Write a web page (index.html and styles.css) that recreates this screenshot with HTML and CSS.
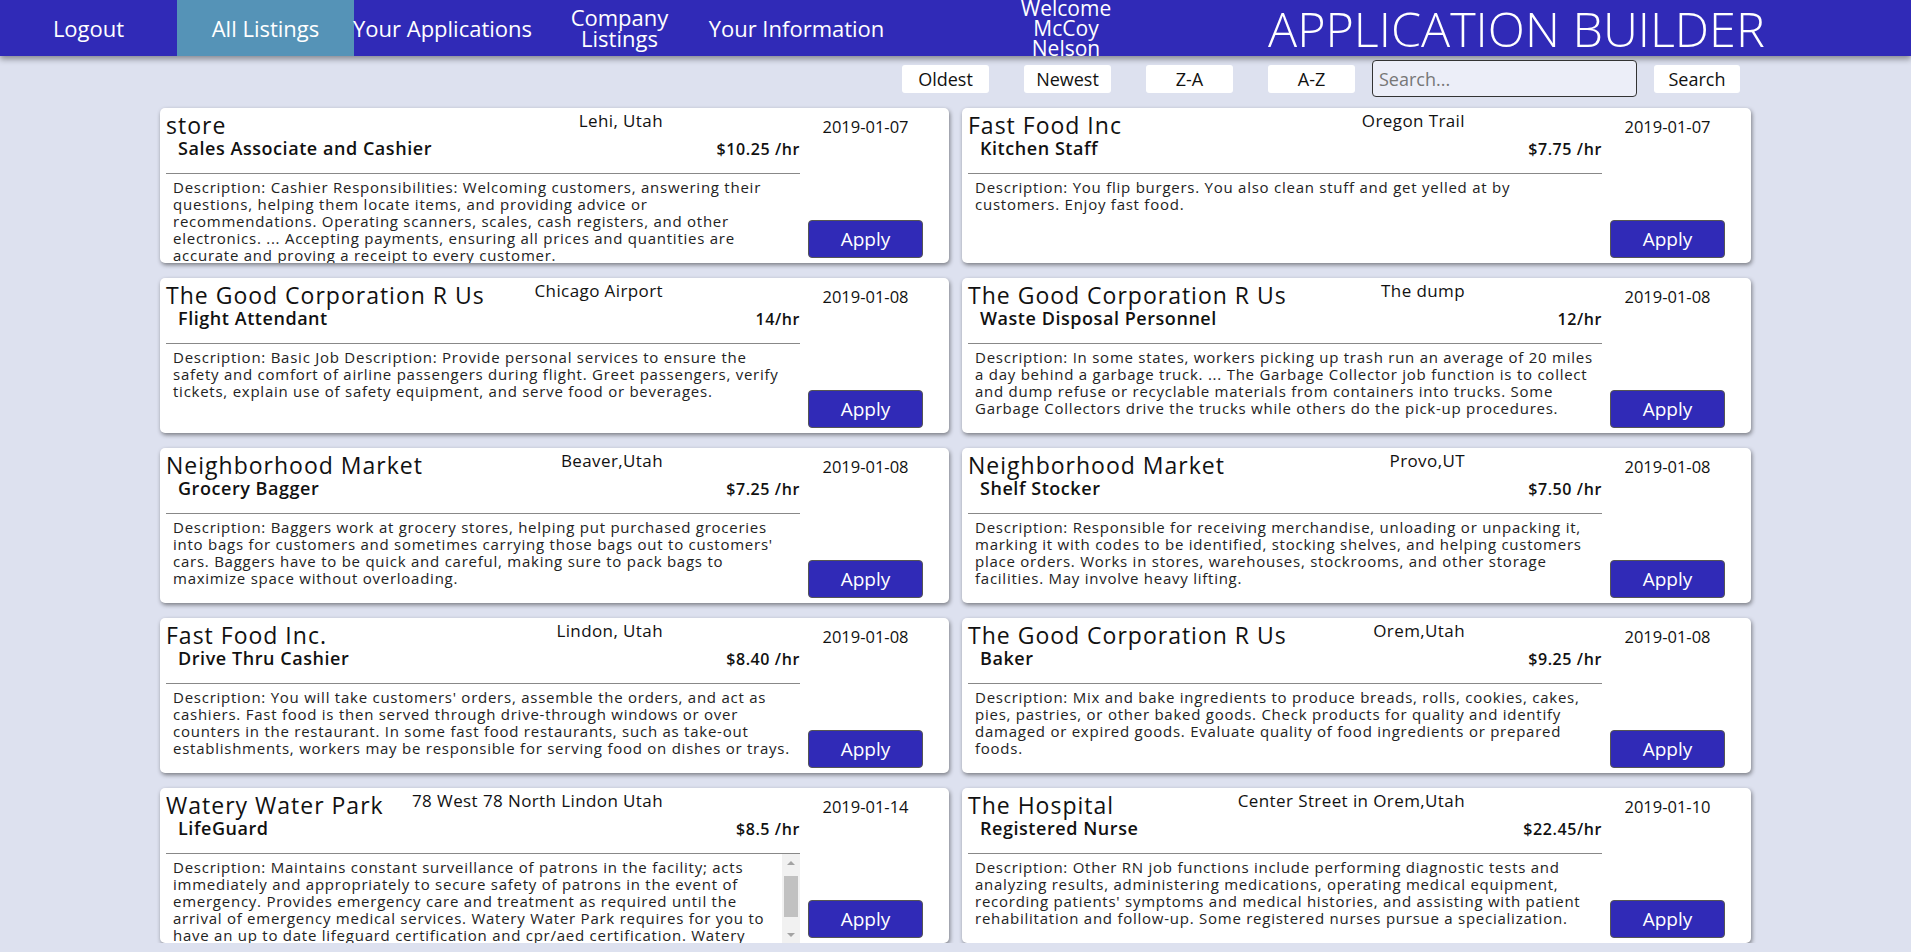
FILE: index.html
```html
<!DOCTYPE html>
<html lang="en">
<head>
<meta charset="utf-8">
<title>Application Builder</title>
<link rel="stylesheet" href="styles.css">
</head>
<body>
<nav class="nav">
  <div class="nav-item">Logout</div>
  <div class="nav-item active">All Listings</div>
  <div class="nav-item nowrap">Your Applications</div>
  <div class="nav-item">Company Listings</div>
  <div class="nav-item">Your Information</div>
  <div class="welcome">Welcome McCoy Nelson</div>
  <div class="title">APPLICATION BUILDER</div>
</nav>

<div class="toolbar">
  <button class="sort-btn first">Oldest</button>
  <button class="sort-btn">Newest</button>
  <button class="sort-btn">Z-A</button>
  <button class="sort-btn">A-Z</button>
  <input class="search" type="text" placeholder="Search...">
  <button class="sort-btn search-btn">Search</button>
</div>

<main class="listings">
  <article class="card">
    <div class="main">
      <div class="head-row"><span class="company">store</span><span class="location">Lehi, Utah</span></div>
      <div class="job-row"><span class="job">Sales Associate and Cashier</span><span class="wage">$10.25 /hr</span></div>
      <div class="divider"></div>
      <div class="desc">Description: Cashier Responsibilities: Welcoming customers, answering their questions, helping them locate items, and providing advice or recommendations. Operating scanners, scales, cash registers, and other electronics. ... Accepting payments, ensuring all prices and quantities are accurate and proving a receipt to every customer.</div>
    </div>
    <div class="side"><span class="date">2019-01-07</span><button class="apply">Apply</button></div>
  </article>

  <article class="card">
    <div class="main">
      <div class="head-row"><span class="company">Fast Food Inc</span><span class="location">Oregon Trail</span></div>
      <div class="job-row"><span class="job">Kitchen Staff</span><span class="wage">$7.75 /hr</span></div>
      <div class="divider"></div>
      <div class="desc">Description: You flip burgers. You also clean stuff and get yelled at by customers. Enjoy fast food.</div>
    </div>
    <div class="side"><span class="date">2019-01-07</span><button class="apply">Apply</button></div>
  </article>

  <article class="card">
    <div class="main">
      <div class="head-row"><span class="company">The Good Corporation R Us</span><span class="location">Chicago Airport</span></div>
      <div class="job-row"><span class="job">Flight Attendant</span><span class="wage">14/hr</span></div>
      <div class="divider"></div>
      <div class="desc">Description: Basic Job Description: Provide personal services to ensure the safety and comfort of airline passengers during flight. Greet passengers, verify tickets, explain use of safety equipment, and serve food or beverages.</div>
    </div>
    <div class="side"><span class="date">2019-01-08</span><button class="apply">Apply</button></div>
  </article>

  <article class="card">
    <div class="main">
      <div class="head-row"><span class="company">The Good Corporation R Us</span><span class="location">The dump</span></div>
      <div class="job-row"><span class="job">Waste Disposal Personnel</span><span class="wage">12/hr</span></div>
      <div class="divider"></div>
      <div class="desc">Description: In some states, workers picking up trash run an average of 20 miles a day behind a garbage truck. ... The Garbage Collector job function is to collect and dump refuse or recyclable materials from containers into trucks. Some Garbage Collectors drive the trucks while others do the pick-up procedures.</div>
    </div>
    <div class="side"><span class="date">2019-01-08</span><button class="apply">Apply</button></div>
  </article>

  <article class="card">
    <div class="main">
      <div class="head-row"><span class="company">Neighborhood Market</span><span class="location">Beaver,Utah</span></div>
      <div class="job-row"><span class="job">Grocery Bagger</span><span class="wage">$7.25 /hr</span></div>
      <div class="divider"></div>
      <div class="desc">Description: Baggers work at grocery stores, helping put purchased groceries into bags for customers and sometimes carrying those bags out to customers' cars. Baggers have to be quick and careful, making sure to pack bags to maximize space without overloading.</div>
    </div>
    <div class="side"><span class="date">2019-01-08</span><button class="apply">Apply</button></div>
  </article>

  <article class="card">
    <div class="main">
      <div class="head-row"><span class="company">Neighborhood Market</span><span class="location">Provo,UT</span></div>
      <div class="job-row"><span class="job">Shelf Stocker</span><span class="wage">$7.50 /hr</span></div>
      <div class="divider"></div>
      <div class="desc">Description: Responsible for receiving merchandise, unloading or unpacking it, marking it with codes to be identified, stocking shelves, and helping customers place orders. Works in stores, warehouses, stockrooms, and other storage facilities. May involve heavy lifting.</div>
    </div>
    <div class="side"><span class="date">2019-01-08</span><button class="apply">Apply</button></div>
  </article>

  <article class="card">
    <div class="main">
      <div class="head-row"><span class="company">Fast Food Inc.</span><span class="location">Lindon, Utah</span></div>
      <div class="job-row"><span class="job">Drive Thru Cashier</span><span class="wage">$8.40 /hr</span></div>
      <div class="divider"></div>
      <div class="desc">Description: You will take customers' orders, assemble the orders, and act as cashiers. Fast food is then served through drive-through windows or over counters in the restaurant. In some fast food restaurants, such as take-out establishments, workers may be responsible for serving food on dishes or trays.</div>
    </div>
    <div class="side"><span class="date">2019-01-08</span><button class="apply">Apply</button></div>
  </article>

  <article class="card">
    <div class="main">
      <div class="head-row"><span class="company">The Good Corporation R Us</span><span class="location">Orem,Utah</span></div>
      <div class="job-row"><span class="job">Baker</span><span class="wage">$9.25 /hr</span></div>
      <div class="divider"></div>
      <div class="desc">Description: Mix and bake ingredients to produce breads, rolls, cookies, cakes, pies, pastries, or other baked goods. Check products for quality and identify damaged or expired goods. Evaluate quality of food ingredients or prepared foods.</div>
    </div>
    <div class="side"><span class="date">2019-01-08</span><button class="apply">Apply</button></div>
  </article>

  <article class="card">
    <div class="main">
      <div class="head-row"><span class="company">Watery Water Park</span><span class="location">78 West 78 North Lindon Utah</span></div>
      <div class="job-row"><span class="job">LifeGuard</span><span class="wage">$8.5 /hr</span></div>
      <div class="divider"></div>
      <div class="desc-wrap">
        <div class="desc">Description: Maintains constant surveillance of patrons in the facility; acts immediately and appropriately to secure safety of patrons in the event of emergency. Provides emergency care and treatment as required until the arrival of emergency medical services. Watery Water Park requires for you to have an up to date lifeguard certification and cpr/aed certification. Watery Water Park will provide training on all park attractions and safety procedures before your first shift.</div>
        <div class="scrollbar" aria-hidden="true">
          <span class="sb-btn"><span class="arrow-up"></span></span>
          <span class="sb-track"><span class="sb-thumb"></span></span>
          <span class="sb-btn"><span class="arrow-down"></span></span>
        </div>
      </div>
    </div>
    <div class="side"><span class="date">2019-01-14</span><button class="apply">Apply</button></div>
  </article>

  <article class="card">
    <div class="main">
      <div class="head-row"><span class="company">The Hospital</span><span class="location">Center Street in Orem,Utah</span></div>
      <div class="job-row"><span class="job">Registered Nurse</span><span class="wage">$22.45/hr</span></div>
      <div class="divider"></div>
      <div class="desc">Description: Other RN job functions include performing diagnostic tests and analyzing results, administering medications, operating medical equipment, recording patients' symptoms and medical histories, and assisting with patient rehabilitation and follow-up. Some registered nurses pursue a specialization.</div>
    </div>
    <div class="side"><span class="date">2019-01-10</span><button class="apply">Apply</button></div>
  </article>
</main>
</body>
</html>
```

FILE: styles.css
```css
* { box-sizing: border-box; }

body {
  margin: 0;
  background: #dde1ef;
  font-family: "Open Sans", "Noto Sans", sans-serif;
  color: #111;
}

.nav {
  height: 56px;
  background: #302ab7;
  color: #fff;
  display: flex;
  align-items: stretch;
  box-shadow: 0 3px 6px rgba(0, 0, 0, 0.4);
}

.nav-item {
  width: 177px;
  display: flex;
  align-items: center;
  justify-content: center;
  text-align: center;
  font-size: 22px;
  line-height: 21px;
}

.nav-item.nowrap { white-space: nowrap; }

.nav-item.active { background: #5593b7; }

.welcome {
  width: 120px;
  margin-left: 121px;
  display: flex;
  align-items: center;
  justify-content: center;
  text-align: center;
  font-size: 21px;
  line-height: 20px;
}

.title {
  margin-left: 142px;
  display: flex;
  align-items: center;
  font-size: 48.5px;
  font-weight: 300;
  white-space: nowrap;
}

.toolbar {
  width: 1591px;
  height: 45px;
  margin: 0 auto;
  padding-right: 11px;
  display: flex;
  justify-content: flex-end;
  align-items: center;
}

.sort-btn {
  width: 87px;
  height: 28px;
  margin-left: 35px;
  padding: 0;
  border: none;
  border-radius: 3px;
  background: #fff;
  color: #111;
  font-family: inherit;
  font-size: 18px;
}

.sort-btn.first { margin-left: 0; }

.search {
  width: 265px;
  height: 37px;
  margin-left: 17px;
  padding: 0 6px;
  border: 1px solid #333;
  border-radius: 4px;
  background: #eceef8;
  font-family: inherit;
  font-size: 18px;
}

.search::placeholder { color: #777; }

.search-btn { width: 86px; margin-left: 17px; }

.listings {
  width: 1591px;
  margin: 7px auto 0;
  display: grid;
  grid-template-columns: 789px 789px;
  column-gap: 13px;
  row-gap: 15px;
}

.card {
  height: 155px;
  background: #fff;
  border-radius: 5px;
  box-shadow: 1px 2px 4px rgba(0, 0, 0, 0.45);
  padding: 0 18px 0 6px;
  display: grid;
  grid-template-columns: 634px 131px;
  overflow: hidden;
}

.main {
  display: flex;
  flex-direction: column;
  min-height: 0;
}

.head-row {
  display: flex;
  justify-content: space-between;
  align-items: flex-start;
  padding-top: 4px;
}

.company {
  font-size: 23px;
  line-height: 26px;
  font-weight: 500;
  letter-spacing: 1px;
  white-space: nowrap;
}

.location {
  font-size: 17px;
  line-height: 20px;
  letter-spacing: 0.4px;
  margin-top: -1px;
  margin-right: 137px;
  white-space: nowrap;
}

.job-row {
  display: flex;
  justify-content: space-between;
  align-items: baseline;
}

.job {
  padding-left: 12px;
  font-size: 18px;
  line-height: 20px;
  font-weight: 600;
  letter-spacing: 0.55px;
}

.wage {
  font-size: 16px;
  font-weight: 600;
  letter-spacing: 0.6px;
}

.divider {
  height: 1px;
  margin-top: 13px;
  background: #888;
}

.desc {
  flex: 1;
  min-height: 0;
  overflow: hidden;
  padding: 5px 6px 0 7px;
  font-size: 15px;
  line-height: 17px;
  letter-spacing: 0.75px;
  color: #222;
}

.desc-wrap {
  flex: 1;
  min-height: 0;
  display: flex;
}

.scrollbar {
  width: 18px;
  display: flex;
  flex-direction: column;
  background: #f1f1f1;
}

.sb-btn {
  height: 17px;
  display: flex;
  align-items: center;
  justify-content: center;
}

.arrow-up {
  width: 0;
  height: 0;
  border-left: 4px solid transparent;
  border-right: 4px solid transparent;
  border-bottom: 4px solid #a3a3a3;
}

.arrow-down {
  width: 0;
  height: 0;
  border-left: 4px solid transparent;
  border-right: 4px solid transparent;
  border-top: 4px solid #a3a3a3;
}

.sb-track {
  flex: 1;
  padding: 5px 2px 0;
}

.sb-thumb {
  display: block;
  height: 41px;
  background: #c1c1c1;
}

.side {
  display: flex;
  flex-direction: column;
  align-items: center;
  justify-content: space-between;
  padding: 9px 0 5px;
}

.date {
  font-size: 16.5px;
  line-height: 20px;
}

.apply {
  width: 115px;
  height: 38px;
  border: 1px solid #555;
  border-radius: 4px;
  background: #302ab7;
  color: #fff;
  font-family: inherit;
  font-size: 19px;
}
```
